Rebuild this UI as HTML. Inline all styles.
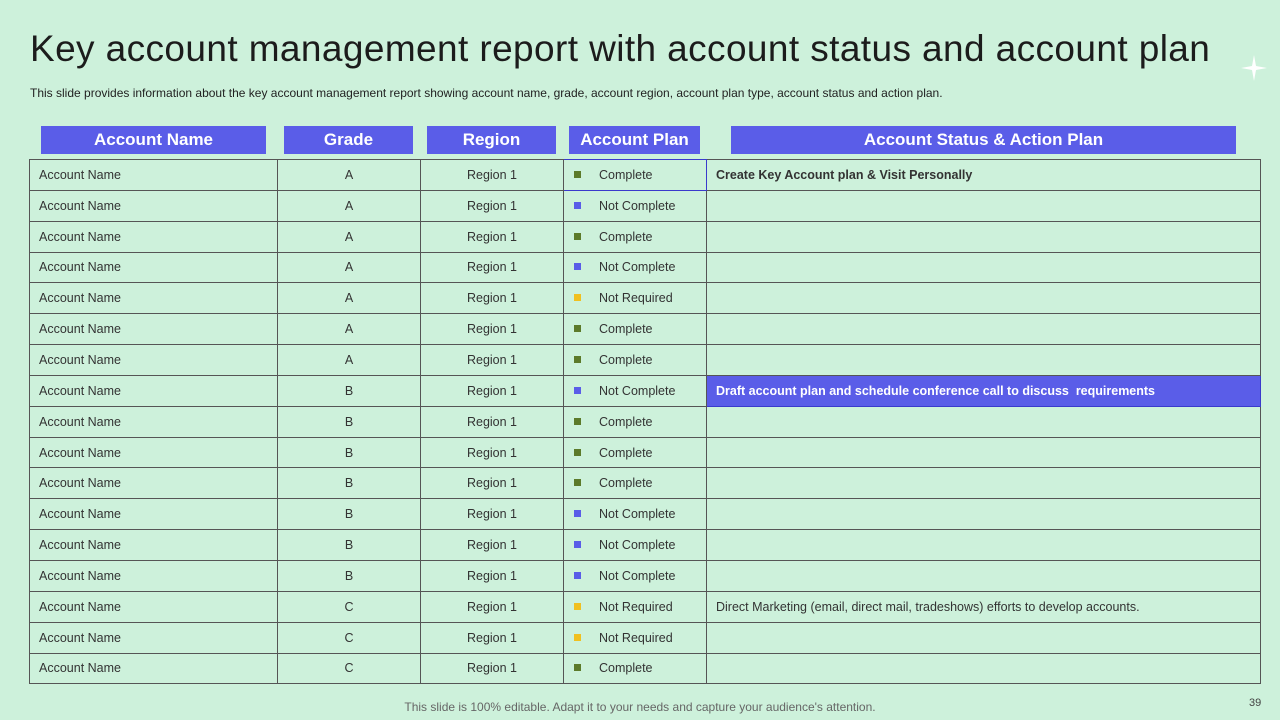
<!DOCTYPE html>
<html><head><meta charset="utf-8"><style>
body{margin:0;width:1280px;height:720px;background:#cdf1db;font-family:"Liberation Sans",sans-serif;position:relative;overflow:hidden}
.t{position:absolute;left:30px;top:28px;font-size:37px;letter-spacing:0.4px;color:#1c1c1c;white-space:nowrap}
.s{position:absolute;left:30px;top:86px;font-size:12px;color:#222;white-space:nowrap}
.h{position:absolute;top:126px;height:28px;background:#5a5de8;color:#fff;font-weight:bold;font-size:17px;line-height:28px;text-align:center}
table{position:absolute;left:29px;top:159px;border-collapse:collapse;font-size:12.5px;color:#333;table-layout:fixed}
tr{height:30.85px}
td{border:1px solid #555;padding:0;box-sizing:border-box}
td.c{text-align:center}
td.l{padding-left:9px}
.d{display:inline-block;width:7px;height:7px;margin:0 18px 0 4px;vertical-align:1px}
.g{background:#5c7a2a}.b{background:#5a5de8}.y{background:#f0c020}
.f{position:absolute;top:700px;left:0;width:1280px;text-align:center;font-size:12px;color:#666}
.n{position:absolute;top:697px;left:1249px;font-size:11px;color:#444}
</style></head><body>
<div class="t">Key account management report with account status and account plan</div>
<div class="s">This slide provides information about the key account management report showing account name, grade, account region, account plan type, account status and action plan.</div>
<svg style="position:absolute;left:1241px;top:55px" width="26" height="26" viewBox="0 0 26 26"><path d="M13 0 L15 11 L26 13 L15 15 L13 26 L11 15 L0 13 L11 11Z" fill="#fff"/></svg>
<div class="h" style="left:41px;width:225px">Account Name</div>
<div class="h" style="left:284px;width:129px">Grade</div>
<div class="h" style="left:427px;width:129px">Region</div>
<div class="h" style="left:569px;width:131px">Account Plan</div>
<div class="h" style="left:731px;width:505px">Account Status &amp; Action Plan</div>
<table>
<colgroup><col style="width:248px"><col style="width:143px"><col style="width:143px"><col style="width:143px"><col style="width:554px"></colgroup>
<tr><td class="l">Account Name</td><td class="c">A</td><td class="c">Region 1</td><td class="l" style="border:1px solid #3a3acc;padding-left:6px"><span class="d g"></span>Complete</td><td class="l" style="font-weight:bold">Create Key Account plan &amp; Visit Personally</td></tr>
<tr><td class="l">Account Name</td><td class="c">A</td><td class="c">Region 1</td><td class="l" style="padding-left:6px"><span class="d b"></span>Not Complete</td><td></td></tr>
<tr><td class="l">Account Name</td><td class="c">A</td><td class="c">Region 1</td><td class="l" style="padding-left:6px"><span class="d g"></span>Complete</td><td></td></tr>
<tr><td class="l">Account Name</td><td class="c">A</td><td class="c">Region 1</td><td class="l" style="padding-left:6px"><span class="d b"></span>Not Complete</td><td></td></tr>
<tr><td class="l">Account Name</td><td class="c">A</td><td class="c">Region 1</td><td class="l" style="padding-left:6px"><span class="d y"></span>Not Required</td><td></td></tr>
<tr><td class="l">Account Name</td><td class="c">A</td><td class="c">Region 1</td><td class="l" style="padding-left:6px"><span class="d g"></span>Complete</td><td></td></tr>
<tr><td class="l">Account Name</td><td class="c">A</td><td class="c">Region 1</td><td class="l" style="padding-left:6px"><span class="d g"></span>Complete</td><td></td></tr>
<tr><td class="l">Account Name</td><td class="c">B</td><td class="c">Region 1</td><td class="l" style="padding-left:6px"><span class="d b"></span>Not Complete</td><td class="l" style="background:#5a5de8;color:#fff;font-weight:bold;border-color:#3a3acc">Draft account plan and schedule conference call to discuss &nbsp;requirements</td></tr>
<tr><td class="l">Account Name</td><td class="c">B</td><td class="c">Region 1</td><td class="l" style="padding-left:6px"><span class="d g"></span>Complete</td><td></td></tr>
<tr><td class="l">Account Name</td><td class="c">B</td><td class="c">Region 1</td><td class="l" style="padding-left:6px"><span class="d g"></span>Complete</td><td></td></tr>
<tr><td class="l">Account Name</td><td class="c">B</td><td class="c">Region 1</td><td class="l" style="padding-left:6px"><span class="d g"></span>Complete</td><td></td></tr>
<tr><td class="l">Account Name</td><td class="c">B</td><td class="c">Region 1</td><td class="l" style="padding-left:6px"><span class="d b"></span>Not Complete</td><td></td></tr>
<tr><td class="l">Account Name</td><td class="c">B</td><td class="c">Region 1</td><td class="l" style="padding-left:6px"><span class="d b"></span>Not Complete</td><td></td></tr>
<tr><td class="l">Account Name</td><td class="c">B</td><td class="c">Region 1</td><td class="l" style="padding-left:6px"><span class="d b"></span>Not Complete</td><td></td></tr>
<tr><td class="l">Account Name</td><td class="c">C</td><td class="c">Region 1</td><td class="l" style="padding-left:6px"><span class="d y"></span>Not Required</td><td class="l">Direct Marketing (email, direct mail, tradeshows) efforts to develop accounts.</td></tr>
<tr><td class="l">Account Name</td><td class="c">C</td><td class="c">Region 1</td><td class="l" style="padding-left:6px"><span class="d y"></span>Not Required</td><td></td></tr>
<tr><td class="l">Account Name</td><td class="c">C</td><td class="c">Region 1</td><td class="l" style="padding-left:6px"><span class="d g"></span>Complete</td><td></td></tr>
</table>
<div class="f">This slide is 100% editable. Adapt it to your needs and capture your audience's attention.</div>
<div class="n">39</div>
</body></html>
